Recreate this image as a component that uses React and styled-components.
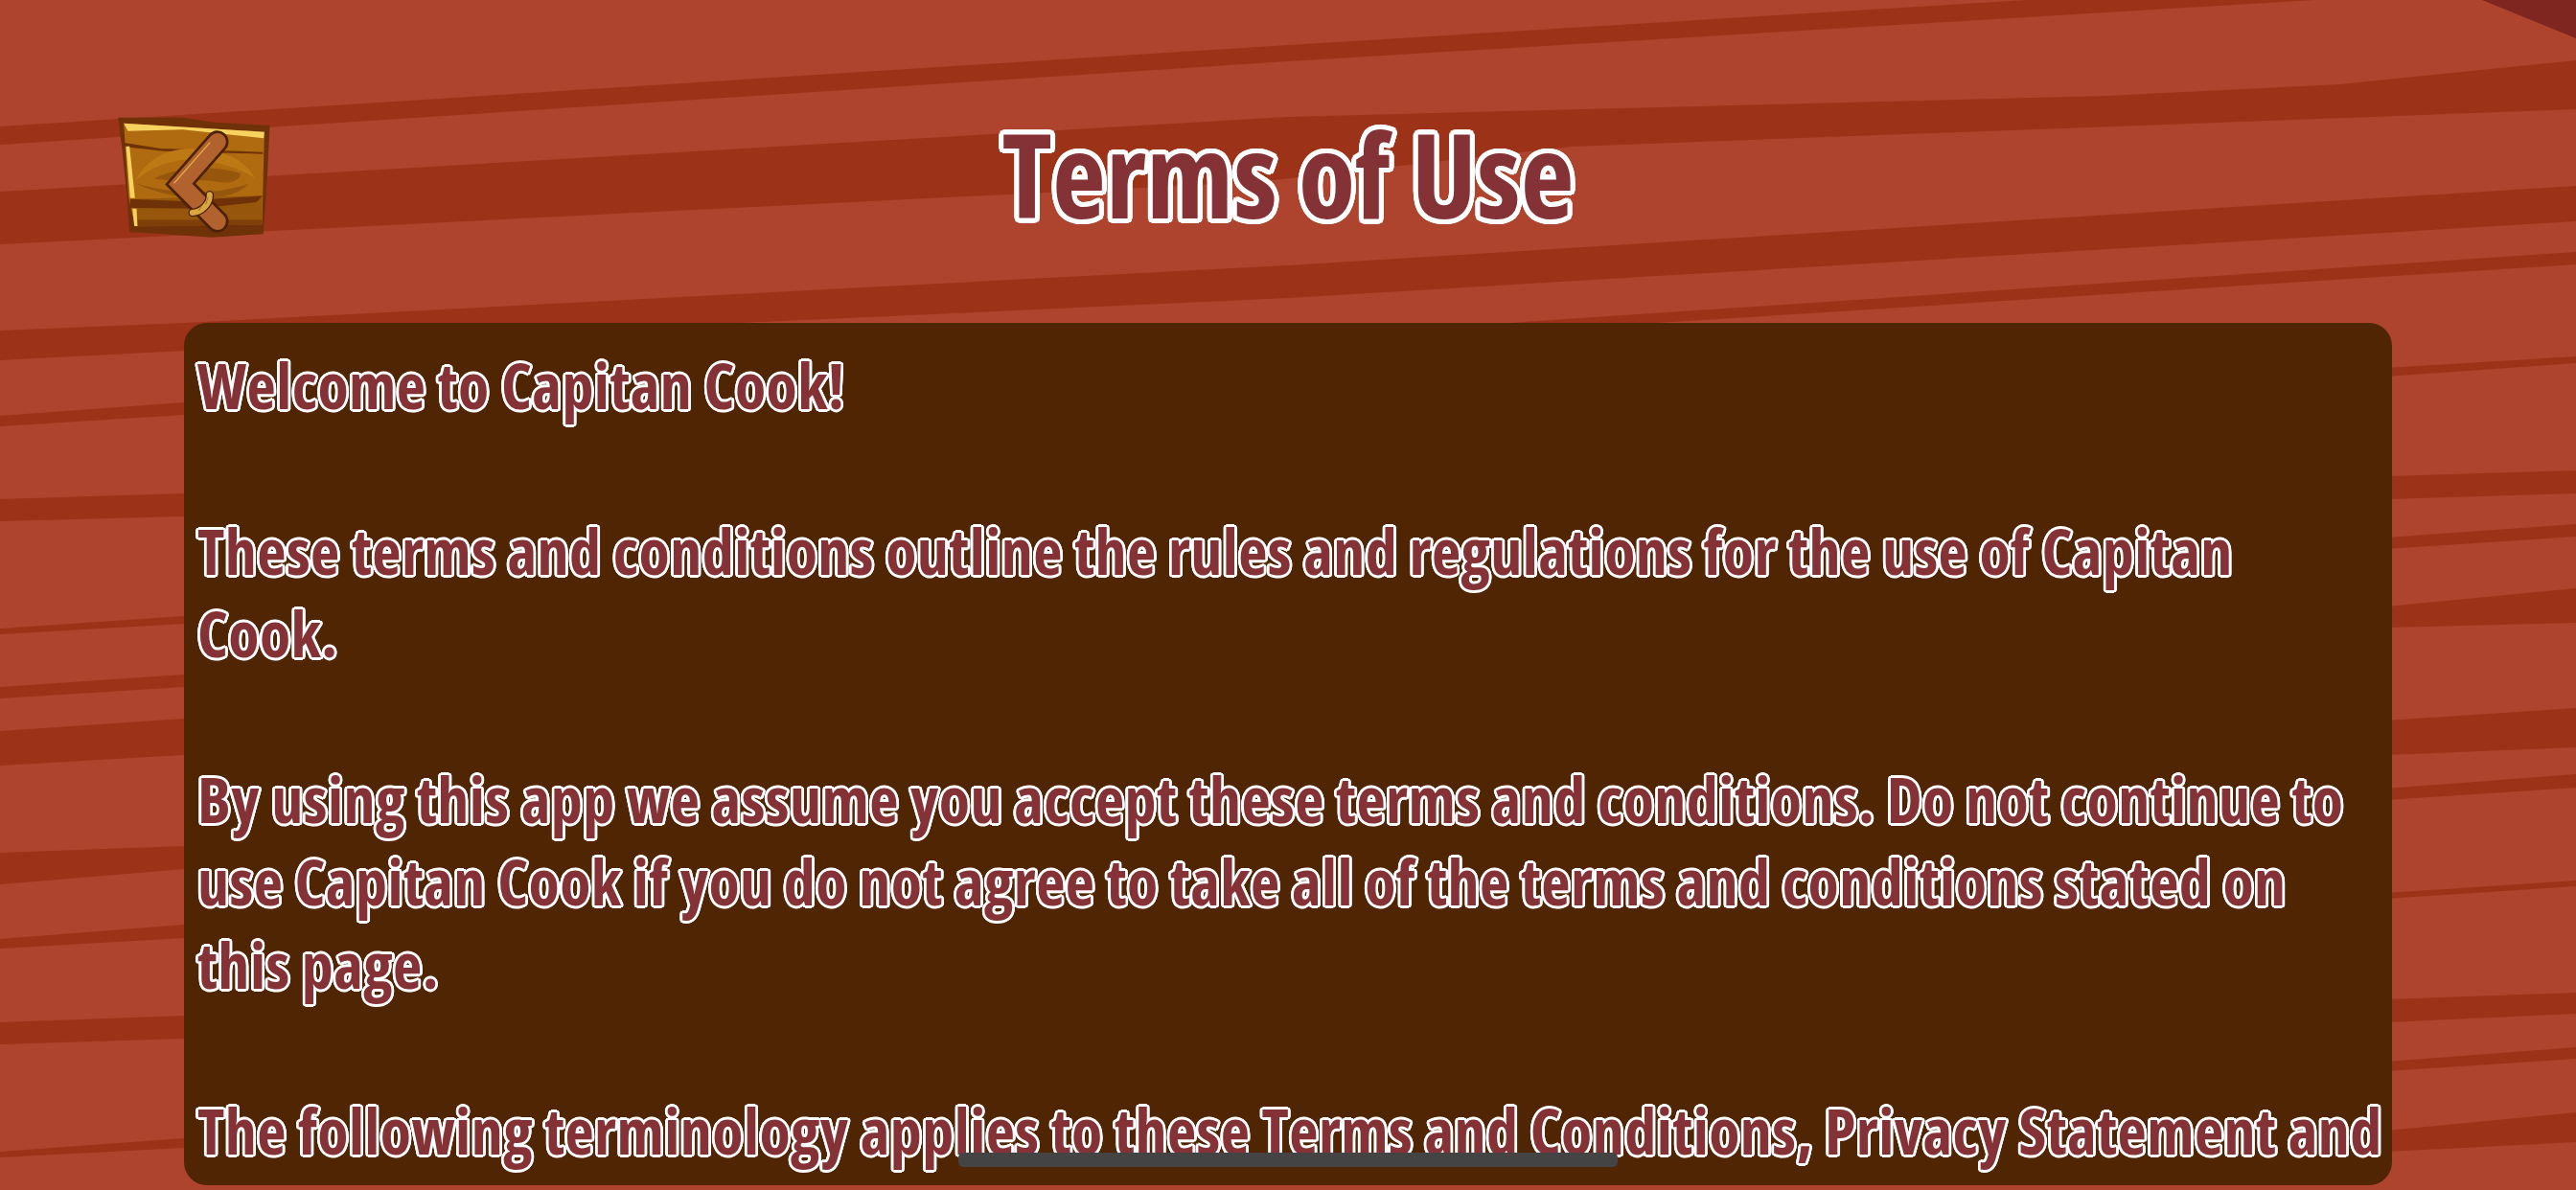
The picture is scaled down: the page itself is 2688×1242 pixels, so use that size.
import styled, { createGlobalStyle } from 'styled-components';

const GlobalStyle = createGlobalStyle`
  html, body {
    margin: 0;
    padding: 0;
    overflow: hidden;
  }
`;

// rounded outline like the game's lettering, a ring of hard shadows
const ring = (radius, steps) =>
  Array.from({ length: steps }, (_, i) => {
    const angle = (i / steps) * Math.PI * 2;
    const x = (Math.cos(angle) * radius).toFixed(2);
    const y = (Math.sin(angle) * radius).toFixed(2);
    return `${x}px ${y}px 0 #fff`;
  }).join(', ');

const Page = styled.div`
  position: relative;
  display: flex;
  flex-direction: column;
  width: 2688px;
  height: 1242px;
  overflow: hidden;
  background-color: #ae442d;
  font-family: 'Open Sans', 'Lato', sans-serif;
  font-stretch: 75%;
`;

const Backdrop = styled.svg`
  position: absolute;
  inset: 0;
  width: 100%;
  height: 100%;
`;

const Header = styled.header`
  position: relative;
  display: grid;
  grid-template-columns: 1fr auto 1fr;
  align-items: start;
  height: 337px;
  padding: 122px 123px 0;
  box-sizing: border-box;
`;

const BackButton = styled.button`
  width: 159px;
  height: 126px;
  padding: 0;
  border: 0;
  background: none;
  cursor: pointer;
`;

const Title = styled.h1`
  margin: 0;
  font-size: 122px;
  font-weight: 700;
  line-height: 118px;
  color: #853237;
  text-shadow: ${ring(5, 24)};
`;

const Panel = styled.main`
  position: relative;
  flex: 1;
  margin: 0 192px 5px;
  padding: 21px 14px 0;
  overflow: hidden;
  border-radius: 24px;
  background-color: #4f2503;
`;

const Paragraph = styled.p`
  margin: 0 0 86.4px;
  font-size: 66px;
  font-weight: 700;
  line-height: 86.4px;
  letter-spacing: 0.45px;
  white-space: nowrap;
  color: #853237;
  text-shadow: ${ring(2.7, 16)};
`;

const ScrollThumb = styled.div`
  position: absolute;
  left: 1000px;
  top: 1203px;
  width: 688px;
  height: 15px;
  border-radius: 5px;
  background-color: #444444;
`;

const stripes = [
  '0,132 1344,47 2115,0 2415,0 1344,64 0,151',
  '0,200 1344,122 2200,100 2441,88 2688,63 2688,114 1640,153 1311,190 0,255',
  '0,345 192,337 1344,277 2688,194 2688,231 1344,311 600,345 0,376',
  '1575,337 2688,263 2688,276 1730,337',
  '0,434 192,420 192,433 0,445',
  '0,521 192,515 192,539 0,544',
  '0,656 192,643 192,651 0,662',
  '0,717 192,704 192,717 0,729',
  '0,763 192,750 192,788 0,799',
  '0,890 192,883 192,907 0,923',
  '0,980 192,965 192,979 0,990',
  '0,1067 192,1060 192,1084 0,1090',
  '0,1202 192,1188 192,1198 0,1208',
  '2490,384 2688,372 2688,379 2490,393',
  '2490,497 2688,491 2688,515 2490,521',
  '2490,561 2688,547 2688,560 2490,573',
  '2490,633 2688,614 2688,650 2490,655',
  '2490,752 2688,739 2688,780 2490,788',
  '2490,823 2688,808 2688,822 2490,835',
  '2490,932 2688,919 2688,925 2490,938',
  '2490,1043 2688,1036 2688,1058 2490,1067',
  '2490,1108 2688,1093 2688,1105 2490,1118',
  '2490,1180 2688,1161 2688,1192 2490,1202',
];

function BackIcon() {
  return (
    <svg width="159" height="126" viewBox="97 98 476 378">
      <polygon points="97,100 300,100 400,115 572,125 565,270 558,380 552,465 390,475 240,465 133,458 125,350 110,200" fill="#6f3208" />
      <polygon points="115,118 555,145 548,435 150,440 130,350" fill="#b06a0f" />
      <polygon points="135,355 548,345 548,420 150,420" fill="#96560c" />
      <polygon points="150,420 548,420 548,435 150,442" fill="#7f3f0b" />
      <polygon points="135,355 300,362 550,345 530,365 350,385 135,383" fill="#6f3208" />
      <polygon points="112,178 230,197 550,208 550,214 240,205 118,192" fill="#6f3208" />
      <path d="M150 298 C200 210 280 190 360 200 C440 205 500 240 525 290 C470 255 420 240 350 235 C270 225 210 250 150 298 Z" fill="#bd7a14" />
      <path d="M210 292 C290 250 400 250 480 275 C480 300 440 310 400 300 C340 290 270 300 210 292 Z" fill="#96560c" />
      <path d="M150 305 C260 340 400 345 505 308 C470 345 420 350 360 352 C280 352 200 330 150 305 Z" fill="#96560c" />
      <polygon points="115,118 555,145 553,165 300,138 128,142" fill="#f6d25f" />
      <polygon points="122,190 133,190 150,352 135,352" fill="#f6d25f" />
      <polygon points="142,385 155,385 158,440 148,440" fill="#f6d25f" />
      <path d="M408 176 L292 308 L408 425" fill="none" stroke="#4d2106" strokeWidth="70" strokeLinecap="round" strokeMiterlimit="10" />
      <path d="M408 176 L292 308 L408 425" fill="none" stroke="#b1622f" strokeWidth="54" strokeLinecap="round" strokeMiterlimit="10" />
      <path d="M272 306 L385 178" fill="none" stroke="#e2b04a" strokeWidth="4" />
      <path d="M330 398 C360 395 385 370 384 342" fill="none" stroke="#4d2106" strokeWidth="26" strokeLinecap="round" />
      <path d="M330 398 C360 395 385 370 384 342" fill="none" stroke="#d9a740" strokeWidth="18" strokeLinecap="round" />
      <path d="M350 392 L362 370 M372 372 L378 350" fill="none" stroke="#8a5a1a" strokeWidth="2" />
    </svg>
  );
}

function App() {
  return (
    <Page>
      <GlobalStyle />
      <Backdrop viewBox="0 0 2688 1242">
        {stripes.map((points) => (
          <polygon key={points} points={points} fill="#9c3318" />
        ))}
        <polygon points="2590,0 2688,0 2688,40" fill="#7f2621" />
      </Backdrop>
      <Header>
        <BackButton aria-label="Back">
          <BackIcon />
        </BackButton>
        <Title>Terms of Use</Title>
      </Header>
      <Panel>
        <Paragraph>Welcome to Capitan Cook!</Paragraph>
        <Paragraph>
          These terms and conditions outline the rules and regulations for the use of Capitan
          <br />
          Cook.
        </Paragraph>
        <Paragraph>
          By using this app we assume you accept these terms and conditions. Do not continue to
          <br />
          use Capitan Cook if you do not agree to take all of the terms and conditions stated on
          <br />
          this page.
        </Paragraph>
        <Paragraph>
          The following terminology applies to these Terms and Conditions, Privacy Statement and
          <br />
          Disclaimer Notice and all Agreements: "Client", "You" and "Your" refers to you, the
        </Paragraph>
      </Panel>
      <ScrollThumb />
    </Page>
  );
}

export default App;
